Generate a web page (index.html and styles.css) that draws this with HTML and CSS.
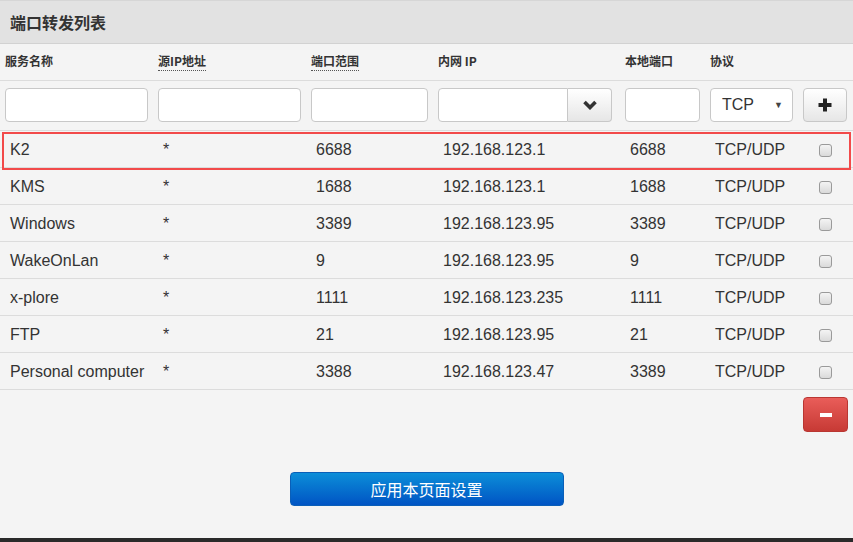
FILE: index.html
```html
<!DOCTYPE html>
<html lang="zh-CN">
<head>
<meta charset="utf-8">
<title>端口转发列表</title>
<link rel="stylesheet" href="styles.css">
</head>
<body>
<div class="page">
  <div class="panel-head">端口转发列表</div>
  <div class="grid head-row">
    <div>服务名称</div>
    <div><span class="abbr">源IP地址</span></div>
    <div><span class="abbr">端口范围</span></div>
    <div>内网 IP</div>
    <div>本地端口</div>
    <div>协议</div>
    <div></div>
  </div>
  <div class="grid input-row">
    <div><input class="field w143" type="text"></div>
    <div><input class="field w143" type="text"></div>
    <div><input class="field w117" type="text"></div>
    <div class="group">
      <input class="field group-input" type="text">
      <button class="btn-light group-btn" type="button">
        <svg width="14" height="10" viewBox="0 0 14 10"><path d="M1.5 2 L7 7.5 L12.5 2" fill="none" stroke="#333" stroke-width="3.6" stroke-linejoin="miter"/></svg>
      </button>
    </div>
    <div><input class="field w75" type="text"></div>
    <div><div class="select"><span>TCP</span><span class="caret">&#9660;</span></div></div>
    <div><button class="btn-light plus" type="button">
      <svg width="16" height="16" viewBox="0 0 16 16"><path d="M8 1.5 V14.5 M1.5 8 H14.5" stroke="#222" stroke-width="4"/></svg>
    </button></div>
  </div>
  <div class="rows">
    <div class="grid data-row selected"><div>K2</div><div>*</div><div>6688</div><div>192.168.123.1</div><div>6688</div><div>TCP/UDP</div><div><span class="check"></span></div></div>
    <div class="grid data-row"><div>KMS</div><div>*</div><div>1688</div><div>192.168.123.1</div><div>1688</div><div>TCP/UDP</div><div><span class="check"></span></div></div>
    <div class="grid data-row"><div>Windows</div><div>*</div><div>3389</div><div>192.168.123.95</div><div>3389</div><div>TCP/UDP</div><div><span class="check"></span></div></div>
    <div class="grid data-row"><div>WakeOnLan</div><div>*</div><div>9</div><div>192.168.123.95</div><div>9</div><div>TCP/UDP</div><div><span class="check"></span></div></div>
    <div class="grid data-row"><div>x-plore</div><div>*</div><div>1111</div><div>192.168.123.235</div><div>1111</div><div>TCP/UDP</div><div><span class="check"></span></div></div>
    <div class="grid data-row"><div>FTP</div><div>*</div><div>21</div><div>192.168.123.95</div><div>21</div><div>TCP/UDP</div><div><span class="check"></span></div></div>
    <div class="grid data-row"><div>Personal computer</div><div>*</div><div>3388</div><div>192.168.123.47</div><div>3389</div><div>TCP/UDP</div><div><span class="check"></span></div></div>
  </div>
  <div class="del-line">
    <button class="btn-red" type="button"><span class="minus"></span></button>
  </div>
  <div class="apply-line">
    <button class="btn-blue" type="button">应用本页面设置</button>
  </div>
</div>
<div class="bottom-strip"></div>
</body>
</html>
```

FILE: styles.css
```css
html, body {
  margin: 0;
  padding: 0;
  background: #f4f4f4;
}
body {
  width: 853px;
  height: 542px;
  overflow: hidden;
  font-family: "Liberation Sans", Arial, "Noto Sans CJK SC", sans-serif;
  color: #333;
}
.page {
  height: 538px;
  background: #f4f4f4;
}
.panel-head {
  height: 44px;
  box-sizing: border-box;
  border-top: 1px solid #d6d6d6;
  background: #e2e2e2;
  border-bottom: 1px solid #d2d2d2;
  padding: 0 10px;
  line-height: 42px;
  font-family: "Noto Sans CJK SC", sans-serif;
  font-size: 16px;
  font-weight: bold;
  color: #333;
}
.grid {
  display: grid;
  grid-template-columns: 153px 153px 127px 187px 85px 93px 1fr;
  padding-left: 5px;
  align-items: center;
}
.head-row {
  height: 37px;
  box-sizing: border-box;
  border-bottom: 1px solid #dcdcdc;
  font-family: "Noto Sans CJK SC", sans-serif;
  font-size: 12px;
  font-weight: bold;
  color: #333;
  padding-bottom: 3px;
}
.abbr {
  border-bottom: 1px dotted #555;
  padding-bottom: 1px;
}
.input-row {
  height: 50px;
  box-sizing: border-box;
  padding-top: 7px;
  padding-bottom: 8px;
  border-bottom: 1px solid #dcdcdc;
}
.field {
  display: block;
  height: 34px;
  box-sizing: border-box;
  border: 1px solid #c8c8c8;
  border-radius: 4px;
  background: #fff;
  margin: 0;
  padding: 0 6px;
  font: 14px "Liberation Sans", Arial, sans-serif;
}
.w143 { width: 143px; }
.w117 { width: 117px; }
.w75 { width: 75px; }
.group {
  display: flex;
  width: 174px;
}
.group-input {
  width: 130px;
  border-radius: 4px 0 0 4px;
}
.btn-light {
  box-sizing: border-box;
  height: 34px;
  border: 1px solid #c8c8c8;
  border-radius: 4px;
  background: linear-gradient(#ffffff, #e6e6e6);
  display: flex;
  align-items: center;
  justify-content: center;
  padding: 0;
  margin: 0;
}
.group-btn {
  width: 44px;
  border-left: none;
  border-radius: 0 4px 4px 0;
}
.plus {
  width: 44px;
}
.select {
  width: 83px;
  height: 34px;
  box-sizing: border-box;
  border: 1px solid #c8c8c8;
  border-radius: 4px;
  background: #fff;
  display: flex;
  align-items: center;
  justify-content: space-between;
  padding: 0 9px 0 11px;
  font-size: 16px;
  color: #333;
}
.caret {
  font-size: 9px;
  color: #444;
}
.data-row {
  height: 37px;
  box-sizing: border-box;
  border-bottom: 1px solid #dcdcdc;
  padding-top: 2px;
  font-size: 16px;
  color: #333;
}
.data-row > div {
  padding-left: 5px;
  white-space: nowrap;
}
.data-row.selected {
  position: relative;
}
.data-row.selected::after {
  content: "";
  position: absolute;
  left: 2px;
  right: 2px;
  top: 1px;
  bottom: -3px;
  border: 2px solid #f24a4a;
  pointer-events: none;
}
.check {
  display: block;
  width: 13px;
  height: 13px;
  box-sizing: border-box;
  border: 1px solid #9a9a9a;
  border-radius: 3px;
  background: linear-gradient(#f4f4f4, #dadada);
  margin-left: 11px;
}
.del-line {
  display: flex;
  justify-content: flex-end;
  padding: 7px 5px 0 0;
}
.btn-red {
  width: 45px;
  height: 35px;
  box-sizing: border-box;
  border: 1px solid #b93632;
  border-radius: 4px;
  background: linear-gradient(#e95d59, #c73a35);
  display: flex;
  align-items: center;
  justify-content: center;
  padding: 0;
}
.minus {
  display: block;
  width: 12px;
  height: 4px;
  background: #fff;
}
.apply-line {
  display: flex;
  justify-content: center;
  padding-top: 40px;
}
.btn-blue {
  width: 274px;
  height: 34px;
  box-sizing: border-box;
  border: 1px solid #0a5fb8;
  border-radius: 4px;
  background: linear-gradient(#0c8ed8, #0054c4);
  color: #fff;
  font-family: "Noto Sans CJK SC", sans-serif;
  font-size: 16px;
  padding: 0;
}
.bottom-strip {
  height: 4px;
  background: #2a2a2a;
}
```
